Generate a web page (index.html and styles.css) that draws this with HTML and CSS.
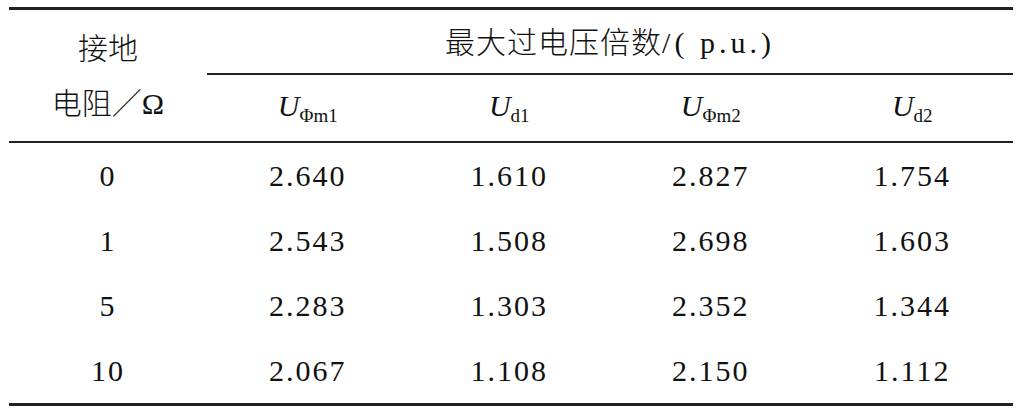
FILE: index.html
```html
<!DOCTYPE html>
<html lang="zh-CN">
<head>
    <meta charset="UTF-8">
    <meta name="viewport" content="width=device-width, initial-scale=1.0">
    <title>接地电阻与最大过电压倍数</title>
    <link rel="stylesheet" href="styles.css">
</head>
<body>

<div class="table-wrap">
    <table class="data-table">
        <colgroup>
            <col class="col-first">
            <col class="col-value">
            <col class="col-value">
            <col class="col-value">
            <col class="col-value">
        </colgroup>
        <thead>
            <tr>
                <th class="ground-head" rowspan="2">接地<br>电阻／Ω</th>
                <th class="group-head" colspan="4">最大过电压倍数<span class="unit">/( p.u.)</span></th>
            </tr>
            <tr class="sub-head">
                <th><i>U</i><sub>Φm1</sub></th>
                <th><i>U</i><sub>d1</sub></th>
                <th><i>U</i><sub>Φm2</sub></th>
                <th><i>U</i><sub>d2</sub></th>
            </tr>
        </thead>
        <tbody>
            <tr><td>0</td><td>2.640</td><td>1.610</td><td>2.827</td><td>1.754</td></tr>
            <tr><td>1</td><td>2.543</td><td>1.508</td><td>2.698</td><td>1.603</td></tr>
            <tr><td>5</td><td>2.283</td><td>1.303</td><td>2.352</td><td>1.344</td></tr>
            <tr><td>10</td><td>2.067</td><td>1.108</td><td>2.150</td><td>1.112</td></tr>
        </tbody>
    </table>
</div>

</body>
</html>
```

FILE: styles.css
```css
body {
    margin: 0;
    background-color: #fff;
    color: #111;
    font-family: "Liberation Serif", "Noto Sans CJK SC", serif;
}
.table-wrap {
    padding: 7px 11px 0 9px;
}
.data-table {
    width: 1004px;
    table-layout: fixed;
    border-collapse: separate;
    border-spacing: 0;
    border-top: 3px solid #222;
    border-bottom: 3px solid #222;
}
.col-first {
    width: 198px;
}
th, td {
    padding: 0;
    text-align: center;
    font-weight: normal;
    font-size: 30px;
    box-sizing: border-box;
}
td {
    height: 65px;
    letter-spacing: 2px;
}
.ground-head {
    line-height: 55px;
    font-weight: 300;
    border-bottom: 2px solid #222;
    vertical-align: middle;
}
.group-head {
    height: 65px;
    padding-bottom: 4px;
    font-weight: 300;
    letter-spacing: 1px;
    border-bottom: 2px solid #222;
}
.unit {
    letter-spacing: 4px;
    font-weight: normal;
}
.sub-head th {
    height: 68px;
    border-bottom: 2px solid #222;
}
.sub-head i {
    font-size: 30px;
}
.sub-head sub {
    font-size: 19px;
    vertical-align: -6px;
}
```
